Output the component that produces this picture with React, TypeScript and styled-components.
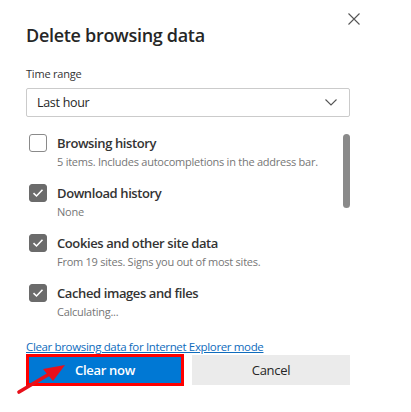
import * as React from 'react'
import styled, { createGlobalStyle } from 'styled-components'

const GlobalStyle = createGlobalStyle`
  html, body {
    margin: 0;
    padding: 0;
    background: #ffffff;
  }
  body {
    font-family: 'Open Sans', 'Noto Sans', sans-serif;
    color: #262626;
  }
`

interface IItem {
  title: string
  detail: string
  checked: boolean
}

const ITEMS: IItem[] = [
  { title: 'Browsing history', detail: '5 items. Includes autocompletions in the address bar.', checked: false },
  { title: 'Download history', detail: 'None', checked: true },
  { title: 'Cookies and other site data', detail: 'From 19 sites. Signs you out of most sites.', checked: true },
  { title: 'Cached images and files', detail: 'Calculating...', checked: true },
]

const CheckItem = ({ title, detail, checked }: IItem) => (
  <Row>
    <Box checked={checked}>
      {checked && (
        <svg width="12" height="10" viewBox="0 0 12 10">
          <path d="M1.5 5.2 L4.5 8 L10.5 1.8" fill="none" stroke="#fff" strokeWidth="1.6" />
        </svg>
      )}
    </Box>
    <RowText>
      <RowTitle>{title}</RowTitle>
      <RowDetail>{detail}</RowDetail>
    </RowText>
  </Row>
)

const App = () => {
  return (
    <>
      <GlobalStyle />
      <Dialog>
        <Header>
          <Title>Delete browsing data</Title>
          <CloseButton aria-label="Close">
            <svg width="12" height="12" viewBox="0 0 12 12">
              <path d="M0.5 0.5 L11.5 11.5 M11.5 0.5 L0.5 11.5" stroke="#555" strokeWidth="1.1" />
            </svg>
          </CloseButton>
        </Header>
        <FieldLabel>Time range</FieldLabel>
        <Select>
          <span>Last hour</span>
          <svg width="12" height="7" viewBox="0 0 12 7">
            <path d="M0.5 0.5 L6 6 L11.5 0.5" fill="none" stroke="#555" strokeWidth="1.1" />
          </svg>
        </Select>
        <ListArea>
          <List>
            {ITEMS.map(item => (
              <CheckItem key={item.title} {...item} />
            ))}
          </List>
          <ScrollTrack>
            <Thumb />
          </ScrollTrack>
        </ListArea>
        <IELink href="#">Clear browsing data for Internet Explorer mode</IELink>
        <Buttons>
          <Primary>Clear now</Primary>
          <Secondary>Cancel</Secondary>
        </Buttons>
        <Arrow width="60" height="40" viewBox="0 0 60 40">
          <path d="M4 32 L36 13" stroke="#e8101a" strokeWidth="3.6" strokeLinecap="round" />
          <path d="M50 5 L28 9 L38 21 Z" fill="#e8101a" />
        </Arrow>
      </Dialog>
    </>
  )
}

const Dialog = styled.div`
  position: relative;
  width: 411px;
  height: 412px;
  box-sizing: border-box;
  padding: 13px 61px 0 26px;
  display: flex;
  flex-direction: column;
`

const Header = styled.div`
  display: flex;
  justify-content: space-between;
  align-items: flex-start;
  margin-right: -10px;
`

const Title = styled.h1`
  margin: 9px 0 0;
  font-size: 18px;
  letter-spacing: -0.3px;
  line-height: 26px;
  font-weight: 600;
  color: #262626;
`

const CloseButton = styled.button`
  border: none;
  background: none;
  padding: 0;
  width: 12px;
  height: 12px;
  display: flex;
`

const FieldLabel = styled.div`
  margin-top: 18px;
  font-size: 11px;
  letter-spacing: -0.2px;
  line-height: 16px;
  color: #333;
`

const Select = styled.div`
  margin-top: 6px;
  height: 29px;
  box-sizing: border-box;
  border: 1px solid #cbcbcb;
  border-radius: 2px;
  padding: 0 12px 0 10px;
  display: flex;
  align-items: center;
  justify-content: space-between;
  font-size: 12.5px;
  letter-spacing: -0.3px;
  color: #262626;
`

const ListArea = styled.div`
  display: flex;
  margin-top: 17px;
  height: 205px;
`

const List = styled.div`
  flex: 1;
  display: flex;
  flex-direction: column;
  gap: 14px;
  padding-left: 3px;
`

const Row = styled.div`
  display: flex;
  gap: 10px;
  height: 36px;
`

const Box = styled.div<{ checked: boolean }>`
  width: 18px;
  height: 18px;
  box-sizing: border-box;
  border-radius: 3px;
  border: 1px solid ${props => (props.checked ? '#6b6b6b' : '#8a8a8a')};
  background: ${props => (props.checked ? '#6b6b6b' : '#fff')};
  display: flex;
  align-items: center;
  justify-content: center;
  flex-shrink: 0;
`

const RowText = styled.div`
  display: flex;
  flex-direction: column;
`

const RowTitle = styled.div`
  font-size: 13px;
  letter-spacing: -0.4px;
  line-height: 18px;
  font-weight: 600;
  color: #333;
`

const RowDetail = styled.div`
  margin-top: 2px;
  font-size: 11px;
  letter-spacing: -0.25px;
  line-height: 15px;
  color: #767676;
`

const ScrollTrack = styled.div`
  width: 7px;
`

const Thumb = styled.div`
  width: 7px;
  height: 74px;
  border-radius: 4px;
  background: #8a8a8a;
`

const IELink = styled.a`
  font-size: 11.5px;
  letter-spacing: -0.35px;
  line-height: 15px;
  color: #0f6cbd;
  text-decoration: underline;
  align-self: flex-start;
`

const Buttons = styled.div`
  display: grid;
  grid-template-columns: 158px 1fr;
  gap: 8px;
`

const Primary = styled.button`
  height: 32px;
  box-sizing: border-box;
  border: 3px solid #ff0000;
  background: #0078d4;
  color: #fff;
  font-family: inherit;
  font-size: 13px;
  letter-spacing: -0.3px;
  font-weight: 600;
`

const Secondary = styled.button`
  height: 30px;
  margin-top: 1px;
  border: none;
  background: #ebebeb;
  color: #262626;
  font-family: inherit;
  font-size: 13px;
  letter-spacing: -0.3px;
`

const Arrow = styled.svg`
  position: absolute;
  left: 15px;
  top: 360px;
`

export default App
